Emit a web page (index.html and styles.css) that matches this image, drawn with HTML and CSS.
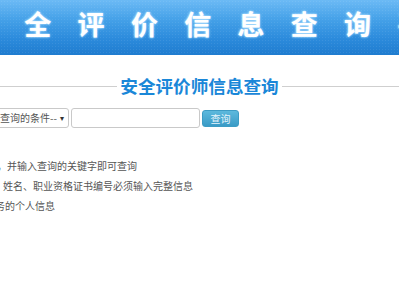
FILE: index.html
```html
<!DOCTYPE html>
<html lang="zh-CN">
<head>
<meta charset="utf-8">
<title>安全评价师信息查询</title>
<link rel="stylesheet" href="styles.css">
</head>
<body>
<div class="page">
  <header class="banner">
    <div class="banner-text">安全评价信息查询平台</div>
  </header>
  <div class="title-row">
    <h1 class="title">安全评价师信息查询</h1>
  </div>
  <form class="search">
    <div class="select"><span class="select-text">请选择查询的条件--</span><span class="arrow">▾</span></div>
    <input class="keyword" type="text">
    <button class="btn" type="button">查询</button>
  </form>
  <ul class="notes">
    <li class="n1">请选择查询条件，并输入查询的关键字即可查询</li>
    <li class="n2">注，姓名、职业资格证书编号必须输入完整信息</li>
    <li class="n3">只提供服务的个人信息</li>
  </ul>
</div>
</body>
</html>
```
FILE: styles.css
```css
* { box-sizing: border-box; }
html, body { margin: 0; padding: 0; background: #fff; }
body {
  font-family: "Noto Sans CJK SC", "Noto Sans", sans-serif;
  overflow: hidden;
  width: 399px;
  height: 300px;
}
.page { width: 399px; overflow: hidden; }

.banner {
  height: 55px;
  background:
    radial-gradient(circle, rgba(255,255,255,0.08) 0.6px, transparent 0.8px) 0 0 / 3px 3px,
    linear-gradient(to bottom, #6cbaf5 0%, #45a1e8 35%, #2c8bdc 70%, #1f7ccf 100%);
  overflow: hidden;
  white-space: nowrap;
}
.banner-text {
  margin-left: -29px;
  padding-top: 7px;
  font-size: 27px;
  font-weight: 700;
  line-height: 34px;
  letter-spacing: 26.3px;
  color: #fff;
  text-shadow: 0 0 2px #bfe6ff, 0 0 3px #8fd0ff;
}

.title-row {
  display: flex;
  align-items: center;
  margin-top: 19px;
  height: 24px;
}
.title-row::before, .title-row::after {
  content: "";
  flex: 1;
  height: 1px;
  background: #cfcfcf;
}
.title {
  margin: 0;
  padding: 0 3px;
  font-size: 17.6px;
  font-weight: 700;
  line-height: 24px;
  color: #1a87d8;
  white-space: nowrap;
}

.search {
  display: flex;
  align-items: center;
  margin: 10px 0 0 -35px;
  height: 20px;
}
.select {
  position: relative;
  width: 104px;
  height: 20px;
  border: 1px solid #c9c9c9;
  border-radius: 3px;
  padding-left: 4px;
  font-size: 10px;
  line-height: 18px;
  color: #555;
  overflow: hidden;
  white-space: nowrap;
  background: #fff;
}
.select-text { display: block; width: 87px; overflow: hidden; }
.arrow {
  position: absolute;
  right: 4px;
  top: 0;
  font-size: 8px;
  color: #333;
}
.keyword {
  width: 129px;
  height: 20px;
  margin: 0 0 0 2px;
  border: 1px solid #c9c9c9;
  border-radius: 3px;
  padding: 0;
  background: #fff;
}
.btn {
  width: 37px;
  height: 17px;
  margin-left: 2px;
  padding: 0;
  border: 1px solid #3d9cc4;
  border-radius: 3px;
  background: linear-gradient(to bottom, #5db9dd, #3a9bc6);
  color: #e6f4fb;
  font-family: "Noto Sans CJK SC", sans-serif;
  font-size: 10px;
  line-height: 15px;
}

.notes {
  list-style: none;
  margin: 28px 0 0 0;
  padding: 0;
  font-size: 10px;
  line-height: 20px;
  color: #555;
  white-space: nowrap;
}
.n1 { margin-left: -73px; }
.n2 { margin-left: -17px; }
.n3 { margin-left: -45px; }
```
